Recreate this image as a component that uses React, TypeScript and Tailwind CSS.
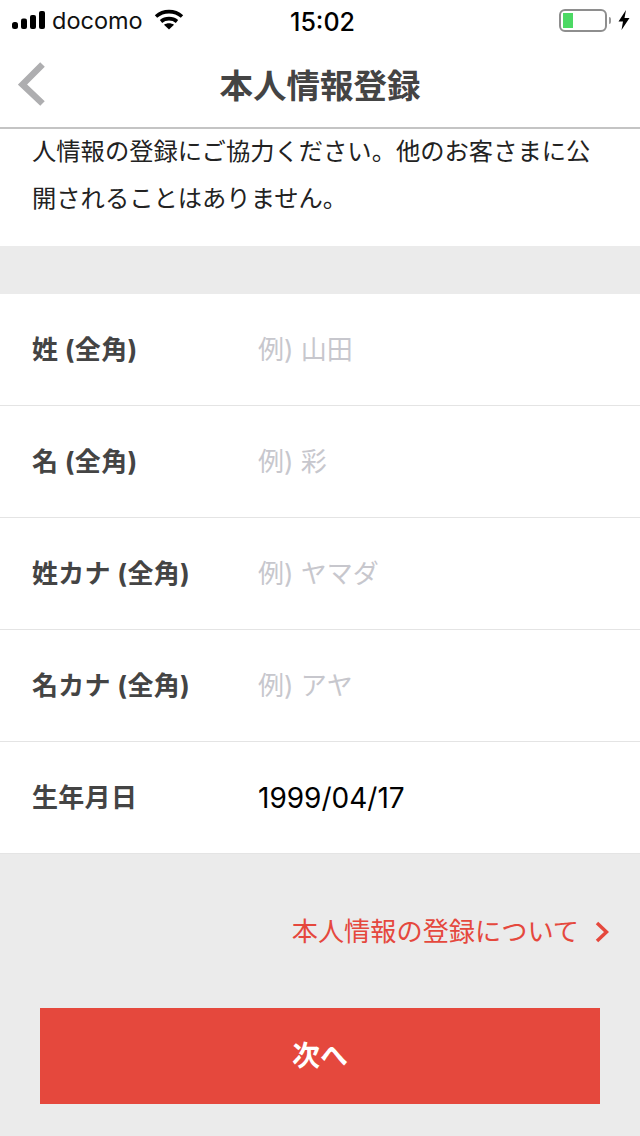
const font = { fontFamily: '"Inter", "Noto Sans CJK JP", sans-serif' }

function FormRow({ label, value, placeholder = true }: { label: string; value: string; placeholder?: boolean }) {
  return (
    <div className="flex h-[112px] items-center border-b border-[#e4e4e4] bg-white pl-[32px]">
      <div className="w-[226px] text-[26px] font-bold leading-[36px] tracking-[0.3px] text-[#444444]">{label}</div>
      <div className={placeholder ? 'text-[26px] leading-[36px] text-[#c7c7cd]' : 'text-[28px] leading-[36px] text-black'}>{value}</div>
    </div>
  )
}

function StatusBar() {
  return (
    <div className="relative flex h-[40px] items-center bg-white pl-[12px] pr-[10px]">
      <svg width="34" height="20" viewBox="0 0 34 20" fill="#000">
        <rect x="0" y="12" width="6" height="7" rx="2.5" />
        <rect x="9" y="8.5" width="6" height="10.5" rx="2" />
        <rect x="18" y="5" width="6" height="14" rx="2" />
        <rect x="27" y="1" width="6" height="18" rx="2" />
      </svg>
      <span className="ml-[6px] pt-[2px] text-[23.5px] leading-[30px] text-[#111]">docomo</span>
      <svg className="ml-[11px] mb-[1px]" width="30" height="22" viewBox="0 0 30 22" fill="none" stroke="#000" strokeWidth="3.6">
        <path d="M2 7.5C9.5 1 20.5 1 28 7.5" />
        <path d="M7 12.5C11.5 8.7 18.5 8.7 23 12.5" />
        <path d="M15 20.5L10 15.8C12.8 13.8 17.2 13.8 20 15.8Z" fill="#000" stroke="none" />
      </svg>
      <span className="absolute left-[290px] top-[7px] text-[25px] font-medium leading-[30px] text-black">15:02</span>
      <div className="ml-auto flex items-center">
        <div className="h-[23px] w-[48px] rounded-[6px] border-2 border-[#8e8e8e] p-[2px]">
          <div className="h-full w-[10px] bg-[#4cd964]" />
        </div>
        <div className="ml-[2px] h-[7px] w-[2px] rounded-r-full bg-[#999]" />
        <svg className="ml-[7px]" width="12" height="20" viewBox="0 0 12 20" fill="#000">
          <path d="M8 0L0.5 11.5H5L3.5 20L11.5 8H6.5Z" />
        </svg>
      </div>
    </div>
  )
}

export default function App() {
  return (
    <div className="h-[1136px] w-[640px] overflow-hidden bg-[#ebebeb]" style={font}>
      <StatusBar />
      <div className="relative flex h-[89px] items-center justify-center border-b-2 border-[#c4c4c4] bg-white pt-[5px]">
        <svg className="absolute left-[18px] top-[22px]" width="28" height="44" viewBox="0 0 28 44" fill="none" stroke="#aeaeb0" strokeWidth="6.5">
          <path d="M24.5 2.5L4.5 22.5L24.5 41.5" />
        </svg>
        <h1 className="text-[33.5px] font-bold leading-[40px] text-[#444444]">本人情報登録</h1>
      </div>
      <p className="-mt-[1px] bg-white px-[32px] pb-[24px] text-[24.3px] leading-[47px] text-[#222222]">
        人情報の登録にご協力ください。他のお客さまに公開されることはありません。
      </p>
      <div className="mt-[48px]">
        <FormRow label="姓 (全角)" value="例) 山田" />
        <FormRow label="名 (全角)" value="例) 彩" />
        <FormRow label="姓カナ (全角)" value="例) ヤマダ" />
        <FormRow label="名カナ (全角)" value="例) アヤ" />
        <FormRow label="生年月日" value="1999/04/17" placeholder={false} />
      </div>
      <div className="mt-[60px] flex items-center justify-end pr-[31px] text-[26.2px] leading-[36px] text-[#e5483d]">
        本人情報の登録について
        <svg className="ml-[16px]" width="14" height="22" viewBox="0 0 14 22" fill="none" stroke="#e5483d" strokeWidth="3.5">
          <path d="M2 2L11.5 11L2 20" />
        </svg>
      </div>
      <button className="mx-[40px] mt-[58px] flex h-[96px] w-[560px] items-center justify-center bg-[#e5483d] text-[28px] font-bold text-white">
        次へ
      </button>
    </div>
  )
}
